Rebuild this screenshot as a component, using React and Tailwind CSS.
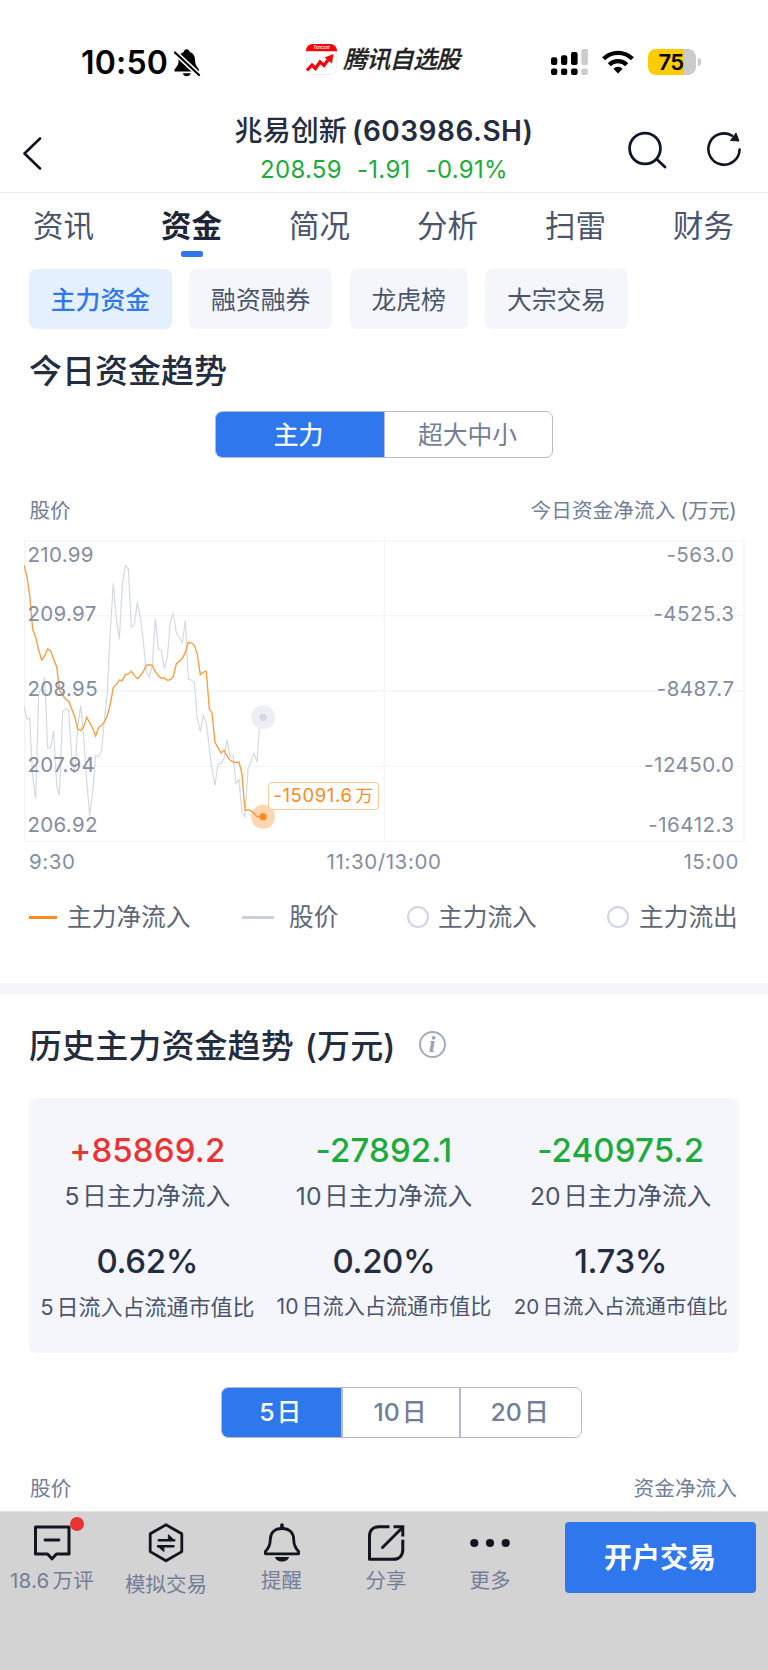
import React from "react";
import clsx from "clsx";

const tabs = ["资讯", "资金", "简况", "分析", "扫雷", "财务"];

const chips = ["主力资金", "融资融券", "龙虎榜", "大宗交易"];

const priceTicks = ["210.99", "209.97", "208.95", "207.94", "206.92"];
const flowTicks = ["-563.0", "-4525.3", "-8487.7", "-12450.0", "-16412.3"];

const stats = [
	{
		days: "5",
		amount: "+85869.2",
		ratio: "0.62%",
		color: "text-[#e93434]",
		noteSize: "text-[22px]",
	},
	{
		days: "10",
		amount: "-27892.1",
		ratio: "0.20%",
		color: "text-[#1faa3c]",
		noteSize: "text-[21.100px]",
	},
	{
		days: "20",
		amount: "-240975.2",
		ratio: "1.73%",
		color: "text-[#1faa3c]",
		noteSize: "text-[20.600px]",
	},
];

const priceLine =
	"72,677 81,717 89,715 98,890 107,956 116,640 125,625 134,592 143,804 152,803 161,752 170,918 178,945 188,696 197,686 206,689 215,826 224,882 233,745 242,677 251,770 260,900 269,1007 278,935 287,828 296,829 305,812 313,720 322,635 331,450 340,310 349,415 358,478 367,315 376,256 385,267 394,442 403,434 412,367 421,412 430,485 439,577 448,593 457,553 466,416 475,506 484,513 493,566 502,532 511,424 520,401 529,458 538,474 547,488 556,421 565,598 574,600 583,609 592,715 601,755 610,706 619,728 628,805 636,870 645,916 654,851 663,851 672,836 681,779 690,830 699,825 708,911 717,898 726,998 735,1010 744,868 753,846 762,820 771,847 780,714 789,712";

const flowLine =
	"72,256 81,290 89,345 98,448 107,472 116,510 125,540 134,528 143,507 152,513 161,538 170,560 179,632 188,645 197,658 206,663 215,686 224,710 233,747 242,751 251,740 260,712 269,728 278,744 287,768 296,742 305,736 314,724 322,707 331,672 340,622 349,614 358,600 367,602 376,584 385,582 394,574 403,586 412,596 421,588 430,575 439,556 448,554 457,557 466,576 475,587 484,595 493,594 502,601 511,599 520,590 529,551 538,544 547,535 556,518 565,486 574,489 583,496 592,524 601,584 610,576 619,574 628,688 636,698 645,787 654,803 663,819 672,811 681,828 690,840 699,846 708,848 717,846 726,882 735,991 744,989 753,992 762,1000 771,1010 789,1010";

const StatusBar = () => (
	<div className="flex h-[100px] items-start text-black">
		<div className="flex w-[306px] items-center pt-[46px] pl-[81px]">
			<span className="w-[92px] text-[32px] leading-[34px] font-semibold tracking-[0.200px] whitespace-nowrap">
				10:50
			</span>
			<svg width="28" height="30" viewBox="0 0 28 30" className="shrink-0">
				<path
					d="M1.500 23.500v-2l3-4C5.800 15.500 5.400 12.500 5.800 10C6.500 6.500 8.500 4.600 10.700 3.900C11.200 2 12.400 1.300 13.700 1.300s2.500.7 3 2.600c3.200.9 5 3.600 5.300 7 .3 3 .2 5 1.300 6.700l2.700 3.900v2z"
					fill="#000"
				/>
				<path d="M9.800 25.300h8c-.5 2-2.200 3-4 3s-3.500-1-4-3z" fill="#000" />
				<path d="M0 2.600L27.500 28.400" stroke="#fff" strokeWidth="5.400" />
				<path
					d="M2 4.500L26 27"
					stroke="#000"
					strokeWidth="2.200"
					strokeLinecap="round"
				/>
			</svg>
		</div>
		<div className="flex w-[245px] items-center pt-[44px]">
			<svg width="31" height="31" viewBox="0 0 31 31">
				<rect
					x=".5"
					y=".5"
					width="30"
					height="30"
					rx="6.500"
					fill="#fff"
					stroke="#f0f0f0"
				/>
				<path
					d="M0 7.200V6.500A6.500 6.500 0 0 1 6.500 0h18A6.500 6.500 0 0 1 31 6.500v.7z"
					fill="#fb0006"
				/>
				<text
					x="15.500"
					y="5.300"
					textAnchor="middle"
					fontSize="4.200"
					fontStyle="italic"
					fontWeight="600"
					fill="#fff"
				>
					Tencent
				</text>
				<path
					d="M1 26.500l5-5.500 3.500 3.500 4.500-6.500 4 3.500 6-8"
					fill="none"
					stroke="#fb0006"
					strokeWidth="3.200"
				/>
				<path d="M18.500 13.500l9-3.500-1.500 9.500z" fill="#fb0006" />
			</svg>
			<span className="pl-[6px] text-[24px] leading-[30px] font-medium tracking-[-0.700px] whitespace-nowrap text-[#222] italic [-webkit-text-stroke:0.300px_#222]">
				腾讯自选股
			</span>
		</div>
		<div className="flex items-start pt-[49px]">
			<svg width="38" height="27" viewBox="0 0 38 27">
				<g fill="#000">
					<rect x="0" y="8.300" width="6.300" height="7.800" rx="2" />
					<rect x="10" y="6.300" width="6.300" height="9.800" rx="2" />
					<rect x="20" y="3" width="6.600" height="13.100" rx="2" />
					<rect x="0" y="19.500" width="6.300" height="6.600" rx="2" />
					<rect x="10" y="19.500" width="6.300" height="6.600" rx="2" />
					<rect x="20" y="19.500" width="6.600" height="6.600" rx="2" />
				</g>
				<g fill="#ccc">
					<rect x="30.300" y="0" width="6.600" height="16.100" rx="2" />
					<rect x="30.300" y="19.500" width="6.600" height="6.600" rx="2" />
				</g>
			</svg>
			<svg
				width="34"
				height="26"
				viewBox="0 0 34 26"
				className="ml-[12px]"
				fill="none"
				stroke="#000"
				strokeWidth="4.300"
			>
				<path d="M2.600 9.800a20.500 20.500 0 0 1 28.800 0" />
				<path d="M8.300 15.700a12.500 12.500 0 0 1 17.400 0" />
				<path
					d="M17 24.500l-4.600-4.800a6.500 6.500 0 0 1 9.200 0z"
					fill="#000"
					stroke="none"
				/>
			</svg>
			<div className="ml-[13px] flex items-center">
				<div className="flex h-[26px] w-[48px] items-center justify-center overflow-hidden rounded-[8px] bg-[linear-gradient(90deg,#ffcc00_36px,#cbcbcb_36px)]">
					<span className="pr-[2px] text-[22px] leading-[26px] font-semibold tracking-[-0.600px]">
						75
					</span>
				</div>
				<div className="ml-[2px] h-[8px] w-[2.500px] rounded-r-full bg-[#cbcbcb]" />
			</div>
		</div>
	</div>
);

const Header = () => (
	<header className="flex h-[93px] items-start border-b border-[#e9ecf3]">
		<div className="w-[184px] pt-[37px] pl-[22px]">
			<svg width="20" height="33" viewBox="0 0 20 33">
				<path
					d="M18 1.500L2.500 16.500L18 31.500"
					fill="none"
					stroke="#11151f"
					strokeWidth="2.600"
					strokeLinecap="round"
					strokeLinejoin="round"
				/>
			</svg>
		</div>
		<div className="flex w-[400px] flex-col items-center pt-[13px] whitespace-nowrap">
			<h1 className="text-[28px] leading-[36px] font-medium tracking-[0.100px] text-[#242c3f]">
				兆易创新
				<span className="ml-[5px] font-semibold tracking-[0.500px]">
					(603986.SH)
				</span>
			</h1>
			<div className="mt-[5px] flex gap-[15px] text-[24px] leading-[32px] tracking-[0.300px] text-[#1faa3c]">
				<span>208.59</span>
				<span>-1.91</span>
				<span>-0.91%</span>
			</div>
		</div>
		<div className="flex pt-[31px] pl-[43px]">
			<svg
				width="42"
				height="38"
				viewBox="0 0 42 38"
				fill="none"
				stroke="#0f1729"
				strokeWidth="2.800"
				strokeLinecap="round"
			>
				<circle cx="18" cy="17.500" r="15.400" />
				<path d="M30 28.500L38 36" />
			</svg>
			<svg width="36" height="38" viewBox="0 0 36 38" className="ml-[37px]">
				<path
					d="M33.600 18.500A15.600 15.600 0 1 1 26 4.700"
					fill="none"
					stroke="#11151f"
					strokeWidth="2.600"
					strokeLinecap="round"
				/>
				<path
					d="M30 2L33 10L24.500 9.500z"
					fill="#11151f"
					stroke="#11151f"
					strokeLinejoin="round"
				/>
			</svg>
		</div>
	</header>
);

const Tabs = () => (
	<nav className="grid h-[76px] grid-cols-6 pt-[14px]">
		{tabs.map((tab) => (
			<div
				key={tab}
				className={clsx(
					"flex flex-col items-center text-[30.500px] leading-[38px]",
					tab === "资金" ? "font-bold text-[#1d2537]" : "text-[#4a556d]"
				)}
			>
				<span className="pr-[1px]">{tab}</span>
				{tab === "资金" && (
					<div className="mt-[6px] h-[6px] w-[22px] rounded-[2.500px] bg-[#2f77ec]" />
				)}
			</div>
		))}
	</nav>
);

const Chips = () => (
	<div className="flex gap-[17.500px] pl-[29px]">
		{chips.map((chip, i) => (
			<div
				key={chip}
				className={clsx(
					"flex h-[60px] items-center rounded-[7px] px-[21.800px] pt-[1px] text-[24.800px] leading-[32px]",
					i === 0
						? "bg-[#e5f0ff] font-medium text-[#2f77ec]"
						: "bg-[#f5f6fb] text-[#4a556d]"
				)}
			>
				{chip}
			</div>
		))}
	</div>
);

const Ticks = ({ ticks, className }) => (
	<div
		className={clsx(
			"absolute top-[2px] flex flex-col text-[20.500px] leading-[26px] text-[#858da1]",
			className
		)}
	>
		<span>{ticks[0]}</span>
		<span className="mt-[33px]">{ticks[1]}</span>
		<span className="mt-[49px]">{ticks[2]}</span>
		<span className="mt-[50px]">{ticks[3]}</span>
		<span className="mt-[34px]">{ticks[4]}</span>
	</div>
);

const FlowChart = () => (
	<div className="relative ml-[23.500px] h-[302px] w-[721px]">
		<svg width="721" height="302" viewBox="72 180 2163 906" fill="none">
			<g stroke="#f4f4f6" strokeWidth="4">
				<path d="M74 182H2232V1084H74z" />
				<path d="M74 407H2232M74 633H2232M74 859H2232M1153 182V1084" />
			</g>
			<polyline points={priceLine} stroke="#d3d8e3" strokeWidth="3.500" />
			<polyline points={flowLine} stroke="#ff9a3d" strokeWidth="4" />
			<circle cx="789" cy="712" r="36" fill="#edeff4" />
			<circle cx="789" cy="712" r="11" fill="#d3d8e3" />
			<circle cx="789" cy="1010" r="36" fill="#ff8a1f" opacity=".35" />
			<circle cx="789" cy="1010" r="11" fill="#ff8a1f" />
		</svg>
		<Ticks
			ticks={priceTicks}
			className="left-[4px] items-start tracking-[0.300px]"
		/>
		<Ticks
			ticks={flowTicks}
			className="right-[10px] items-end tracking-[0.500px]"
		/>
		<div className="absolute top-[242px] left-[244.500px] flex h-[28px] w-[111px] items-center justify-center rounded-[4px] border border-[#ffc999] bg-white text-[18.500px] tracking-[0.600px] whitespace-nowrap text-[#ff8a1f]">
			-15091.6<span className="ml-[3px] text-[17.500px]">万</span>
		</div>
	</div>
);

const Legend = () => (
	<div className="mt-[36px] ml-[29px] flex h-[40px] items-center text-[24.700px] leading-[40px] whitespace-nowrap text-[#5f6878]">
		<div className="flex w-[213px] items-center">
			<i className="mr-[10px] h-[3px] w-[28px] bg-[#ff8a1f]" />
			主力净流入
		</div>
		<div className="flex w-[165px] items-center">
			<i className="mr-[15px] h-[3px] w-[32px] bg-[#c9cfdd]" />
			股价
		</div>
		<div className="flex w-[200px] items-center">
			<i className="mr-[9px] size-[22px] rounded-full border-2 border-[#cfd5e3]" />
			主力流入
		</div>
		<div className="flex items-center">
			<i className="mr-[10px] size-[22px] rounded-full border-2 border-[#cfd5e3]" />
			主力流出
		</div>
	</div>
);

const StatCard = () => (
	<div className="mx-[29px] mt-[31px] grid h-[255px] grid-cols-3 rounded-[7px] bg-[#f5f6fb] pt-[32px] whitespace-nowrap">
		{stats.map((item) => (
			<div key={item.days} className="flex flex-col items-center text-[#4a556d]">
				<div
					className={clsx(
						"text-[33px] leading-[40px] font-medium tracking-[0.150px]",
						item.color
					)}
				>
					{item.amount}
				</div>
				<div className="mt-[9px] text-[24.700px] leading-[34px]">
					{item.days}
					<span className="ml-[2.500px]">日主力净流入</span>
				</div>
				<div className="mt-[28px] text-[33px] leading-[40px] font-medium tracking-[-0.400px] text-[#242c3f]">
					{item.ratio}
				</div>
				<div className={clsx("mt-[9px] leading-[34px]", item.noteSize)}>
					{item.days}
					<span className="ml-[3px]">日流入占流通市值比</span>
				</div>
			</div>
		))}
	</div>
);

const BarItem = ({ label, className, labelClassName = "mt-[2px]", children }) => (
	<div
		className={clsx(
			"flex flex-col items-center text-[20.500px] leading-[28px] whitespace-nowrap text-[#737e98]",
			className
		)}
	>
		<svg
			width="40"
			height="42"
			viewBox="0 0 40 42"
			fill="none"
			stroke="#11151f"
			strokeWidth="3"
			strokeLinejoin="round"
			strokeLinecap="round"
		>
			{children}
		</svg>
		<span className={labelClassName}>{label}</span>
	</div>
);

const BottomBar = () => (
	<footer className="flex h-[159px] shrink-0 items-start border-t border-[#e2e2e2] bg-[#d3d3d3]">
		<div className="relative">
			<BarItem
				label={
					<>
						18.6<span className="ml-[3px]">万评</span>
					</>
				}
				className="w-[104px] pt-[11px]"
				labelClassName="mt-[2px] tracking-[0.200px]"
			>
				<path d="M3.500 4h33.500v27h-12.500l-4.500 4.800-4.500-4.800h-12z" />
				<path d="M13 17h14" strokeWidth="2.800" />
			</BarItem>
			<div className="absolute top-[5px] left-[70px] size-[14px] rounded-full bg-[#e93434]" />
		</div>
		<BarItem
			label="模拟交易"
			className="w-[124px] pt-[11px]"
			labelClassName="mt-[6px]"
		>
			<path
				d="M20 1.800l15.800 9v17.800l-15.800 9.200-15.800-9.200v-17.800z"
				strokeWidth="2.800"
			/>
			<path d="M12.800 17.300h15.500M27.500 23.300h-15.500" strokeWidth="2.400" />
			<path
				d="M22.700 12l5.600 5.300h-5.600zM17.600 28.500l-5.600-5.200h5.600z"
				fill="#11151f"
				strokeWidth="1"
			/>
		</BarItem>
		<BarItem label="提醒" className="ml-[2px] w-[103px] pt-[11px]">
			<path d="M20 2v3" strokeWidth="3.600" />
			<path
				d="M20 5.500c-7.500 0-11.700 4.500-11.700 11 0 6-1.500 8.500-4.900 12v2.300h33.200v-2.300c-3.400-3.500-4.900-6-4.900-12 0-6.500-4.200-11-11.700-11z"
				strokeWidth="2.800"
			/>
			<path
				d="M13 34h14c-1 3.500-4 4.500-7 4.500s-6-1-7-4.500z"
				fill="#11151f"
				stroke="none"
			/>
		</BarItem>
		<BarItem label="分享" className="w-[106px] pt-[11px]">
			<g strokeLinecap="butt" strokeLinejoin="miter">
				<path
					d="M23.500 3.800h-10.500c-6 0-9.500 3.500-9.500 9.500v23h23.500c6 0 9.800-3.500 9.800-9.500v-10"
					strokeLinejoin="round"
				/>
				<path d="M27.500 3.800h9.300v9.700" />
				<path d="M16.500 24.500L36.500 4.500" strokeLinecap="round" />
			</g>
		</BarItem>
		<BarItem label="更多" className="w-[102px] pt-[11px]">
			<g fill="#11151f" stroke="none">
				<circle cx="4.300" cy="20" r="4.100" />
				<circle cx="20" cy="20" r="4.100" />
				<circle cx="35.700" cy="20" r="4.100" />
			</g>
		</BarItem>
		<button className="mt-[10px] ml-[24px] h-[71px] w-[191px] rounded-[4px] bg-[#2f77ec] pt-[1px] pr-[1px] text-[28px] font-bold text-white">
			开户交易
		</button>
	</footer>
);

export default function App() {
	return (
		<div className="flex h-[1670px] w-[768px] flex-col overflow-hidden bg-white font-['Inter','Noto_Sans_CJK_SC',sans-serif]">
			<StatusBar />
			<Header />
			<Tabs />
			<Chips />

			{/* Today's flow */}
			<section className="pt-[20px]">
				<h2 className="pl-[29px] text-[33px] leading-[44px] font-medium text-[#242c3f]">
					今日资金趋势
				</h2>
				<div className="mx-auto mt-[18px] grid h-[47px] w-[338px] grid-cols-2 overflow-hidden rounded-[7px] border border-[#b6bccb] text-center text-[24.800px] leading-[46px]">
					<div className="bg-[#2f77ec] pr-[3px] text-white [-webkit-text-stroke:0.300px_white]">
						主力
					</div>
					<div className="border-l border-[#b6bccb] pr-[2px] text-[#737e98]">
						超大中小
					</div>
				</div>
				<div className="mt-[37px] flex h-[32px] items-center justify-between pr-[31px] pl-[29.500px] text-[20.600px] text-[#737e98]">
					<span>股价</span>
					<span className="tracking-[0.100px]">
						今日资金净流入<span className="ml-[5px]">(万元)</span>
					</span>
				</div>
				<div className="h-[13px]" />
				<FlowChart />
				<div className="mt-[6px] grid grid-cols-3 pr-[29px] pl-[29px] text-[20.500px] leading-[28px] tracking-[0.600px] text-[#858da1]">
					<span>9:30</span>
					<span className="text-center">11:30/13:00</span>
					<span className="text-right">15:00</span>
				</div>
				<div className="-mt-[15px]">
					<Legend />
				</div>
			</section>

			<div className="mt-[46px] h-[11px] shrink-0 bg-[#f5f6fa]" />

			{/* History */}
			<section className="h-[517px] shrink-0 pt-[30px]">
				<div className="flex h-[43px] items-center pl-[29px]">
					<h2 className="text-[33px] leading-[44px] font-medium tracking-[0.100px] whitespace-nowrap text-[#242c3f]">
						历史主力资金趋势<span className="ml-[11px]">(万元)</span>
					</h2>
					<div className="mb-[3px] ml-[23px] flex size-[27px] items-center justify-center rounded-full border-2 border-[#a2aabd] pb-[1px] font-['Liberation_Serif',serif] text-[24px] font-bold text-[#98a1b5] italic">
						i
					</div>
				</div>
				<StatCard />
				<div className="mt-[34px] ml-[220.500px] grid h-[51px] w-[361px] grid-cols-3 overflow-hidden rounded-[7px] border border-[#b6bccb] text-center text-[24.800px] leading-[49px] font-medium text-[#737e98]">
					<div className="bg-[#2f77ec] pr-[2px] text-white">
						5<span className="ml-[2px]">日</span>
					</div>
					<div className="border-x-2 border-[#b6bccb] pr-[2px]">
						10<span className="ml-[2px]">日</span>
					</div>
					<div className="pr-[2px]">
						20<span className="ml-[2px]">日</span>
					</div>
				</div>
				<div className="mt-[35px] flex h-[32px] items-center justify-between pr-[31px] pl-[30px] text-[20.700px] text-[#737e98]">
					<span>股价</span>
					<span>资金净流入</span>
				</div>
			</section>
			<BottomBar />
		</div>
	);
}
